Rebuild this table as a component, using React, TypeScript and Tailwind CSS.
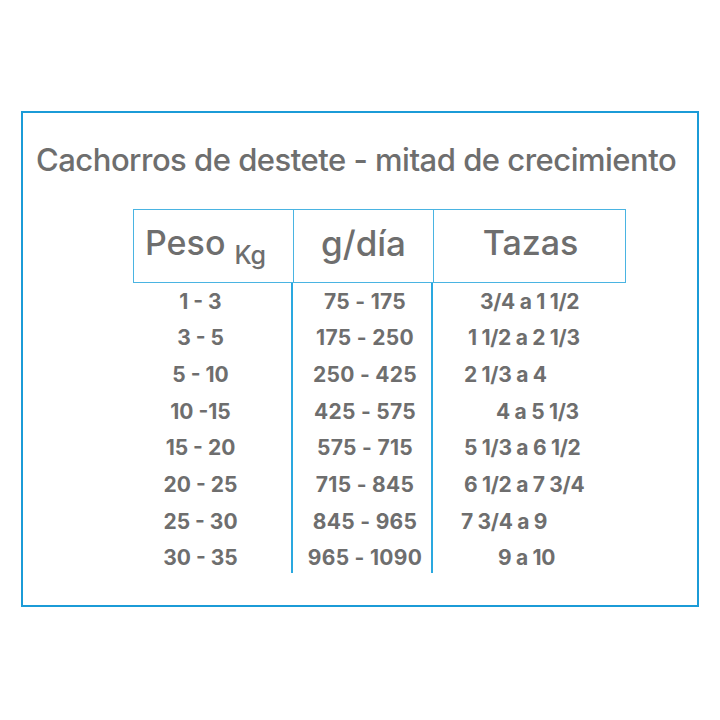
import React from "react";

// Tabla de alimentación: cachorros de destete a mitad de crecimiento
const rows = [
  { peso: "1 - 3", gramos: "75 - 175", tazas: "3/4 a 1 1/2", pad: "pl-[48px]" },
  { peso: "3 - 5", gramos: "175 - 250", tazas: "1 1/2 a 2 1/3", pad: "pl-[36px]" },
  { peso: "5 - 10", gramos: "250 - 425", tazas: "2 1/3 a 4", pad: "pl-[32px]" },
  { peso: "10 -15", gramos: "425 - 575", tazas: "4 a 5 1/3", pad: "pl-[64px]" },
  { peso: "15 - 20", gramos: "575 - 715", tazas: "5 1/3 a 6 1/2", pad: "pl-[32px]" },
  { peso: "20 - 25", gramos: "715 - 845", tazas: "6 1/2 a 7 3/4", pad: "pl-[32px]" },
  { peso: "25 - 30", gramos: "845 - 965", tazas: "7 3/4 a 9", pad: "pl-[29px]" },
  { peso: "30 - 35", gramos: "965 - 1090", tazas: "9 a 10", pad: "pl-[66px]" },
];

export default function App() {
  return (
    <div
      className="w-full h-[720px] bg-white pt-[111px] px-[21px] text-[#6e6e6e]"
      style={{ fontFamily: "Inter, 'Open Sans', sans-serif" }}
    >
      <div className="h-[496px] border-[2.5px] border-[#1b9bd7]">
        <h1 className="mt-[31px] ml-[13px] text-[31px] leading-none font-medium tracking-[-0.5px] whitespace-nowrap">
          Cachorros de destete - mitad de crecimiento
        </h1>

        <div className="mt-[34px] ml-[110px] w-[493px]">
          {/* Encabezado */}
          <div className="grid grid-cols-[159px_140px_194px] h-[74px] border border-[#4ab4e2]">
            <div className="flex items-baseline pl-[11px] pt-[7px]">
              <span className="text-[34px] font-medium">Peso</span>
              <span className="ml-[9px] text-[25px] font-medium translate-y-[9px]">Kg</span>
            </div>
            <div className="flex justify-center pt-[7px] border-l border-[#4ab4e2]">
              <span className="text-[35px] font-medium">g/día</span>
            </div>
            <div className="flex justify-center pt-[7px] border-l border-[#4ab4e2]">
              <span className="text-[34px] font-medium">Tazas</span>
            </div>
          </div>

          {/* Filas */}
          <div className="grid grid-cols-[159px_140px_194px] text-[21px] font-bold">
            <div className="flex flex-col">
              {rows.map((r) => (
                <div key={r.peso} className="h-[36.7px] flex items-center justify-center pr-[24px]">
                  {r.peso}
                </div>
              ))}
            </div>
            <div className="flex flex-col h-[290px] border-l-2 border-r-2 border-[#2aa8df] -mx-px">
              {rows.map((r) => (
                <div key={r.gramos} className="h-[36.7px] shrink-0 flex items-center justify-center pl-[6px] whitespace-nowrap tracking-[0.3px]">
                  {r.gramos}
                </div>
              ))}
            </div>
            <div className="flex flex-col tracking-[-0.3px]">
              {rows.map((r) => (
                <div key={r.tazas} className={`h-[36.7px] flex items-center whitespace-nowrap ${r.pad}`}>
                  {r.tazas}
                </div>
              ))}
            </div>
          </div>
        </div>
      </div>
    </div>
  );
}
